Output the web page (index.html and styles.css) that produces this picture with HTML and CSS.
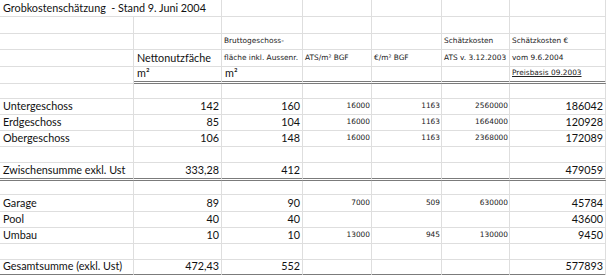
FILE: index.html
```html
<!DOCTYPE html>
<html lang="de">
<head>
<meta charset="utf-8">
<title>Grobkostenschätzung</title>
<link rel="stylesheet" href="styles.css">
</head>
<body>
<table class="sheet">
  <colgroup>
    <col class="ca"><col class="cb"><col class="cc"><col class="cd"><col class="ce"><col class="cf"><col class="cg">
  </colgroup>
  <tr class="h17">
    <td colspan="2" class="title">Grobkostenschätzung&nbsp; - Stand 9. Juni 2004</td><td></td><td></td><td></td><td></td><td></td>
  </tr>
  <tr class="h17"><td></td><td></td><td></td><td></td><td></td><td></td><td></td></tr>
  <tr class="h16">
    <td></td><td></td><td class="s">Bruttogeschoss-</td><td></td><td></td><td class="s">Schätzkosten</td><td class="s">Schätzkosten €</td>
  </tr>
  <tr class="h17">
    <td></td><td>Nettonutzfäche</td><td class="s">fläche inkl. Aussenr.</td><td class="s">ATS/m² BGF</td><td class="s">€/m² BGF</td><td class="s">ATS v. 3.12.2003</td><td class="s">vom 9.6.2004</td>
  </tr>
  <tr class="h16 dbl">
    <td class="single"></td><td>m²</td><td>m²</td><td></td><td></td><td></td><td class="s u">Preisbasis 09.2003</td>
  </tr>
  <tr class="h15"><td></td><td></td><td></td><td></td><td></td><td></td><td></td></tr>
  <tr class="h16">
    <td>Untergeschoss</td><td class="n">142</td><td class="n">160</td><td class="s n">16000</td><td class="s n">1163</td><td class="s n">2560000</td><td class="n">186042</td>
  </tr>
  <tr class="h16">
    <td>Erdgeschoss</td><td class="n">85</td><td class="n">104</td><td class="s n">16000</td><td class="s n">1163</td><td class="s n">1664000</td><td class="n">120928</td>
  </tr>
  <tr class="h16">
    <td>Obergeschoss</td><td class="n">106</td><td class="n">148</td><td class="s n">16000</td><td class="s n">1163</td><td class="s n">2368000</td><td class="n">172089</td>
  </tr>
  <tr class="h16"><td></td><td></td><td></td><td></td><td></td><td></td><td></td></tr>
  <tr class="h18 dbl">
    <td>Zwischensumme exkl. Ust</td><td class="n">333,28</td><td class="n">412</td><td></td><td></td><td></td><td class="n">479059</td>
  </tr>
  <tr class="h14"><td></td><td></td><td></td><td></td><td></td><td></td><td></td></tr>
  <tr class="h17">
    <td>Garage</td><td class="n">89</td><td class="n">90</td><td class="s n">7000</td><td class="s n">509</td><td class="s n">630000</td><td class="n">45784</td>
  </tr>
  <tr class="h16">
    <td>Pool</td><td class="n">40</td><td class="n">40</td><td></td><td></td><td></td><td class="n">43600</td>
  </tr>
  <tr class="h16">
    <td>Umbau</td><td class="n">10</td><td class="n">10</td><td class="s n">13000</td><td class="s n">945</td><td class="s n">130000</td><td class="n">9450</td>
  </tr>
  <tr class="h16"><td></td><td></td><td></td><td></td><td></td><td></td><td></td></tr>
  <tr class="h17 dbl">
    <td>Gesamtsumme (exkl. Ust)</td><td class="n">472,43</td><td class="n">552</td><td></td><td></td><td></td><td class="n">577893</td>
  </tr>
</table>
</body>
</html>
```

FILE: styles.css
```css
html, body {
  margin: 0;
  padding: 0;
  background: #ffffff;
}

body {
  font-family: Lato, "Open Sans", "Liberation Sans", sans-serif;
  font-size: 10.8px;
  color: #111111;
}

.sheet {
  border-collapse: separate;
  border-spacing: 0;
  table-layout: fixed;
  width: 606px;
}

.ca { width: 134px; }
.cb { width: 88px; }
.cc { width: 81px; }
.cd { width: 69px; }
.ce { width: 70px; }
.cf { width: 68px; }
.cg { width: 96px; }

.sheet td {
  border-right: 1px solid #dedede;
  border-bottom: 1px solid #dedede;
  padding: 0 2px 2px 3px;
  vertical-align: bottom;
  white-space: nowrap;
  overflow: visible;
  line-height: 12px;
}

.h14 { height: 14px; }
.h15 { height: 15px; }
.h16 { height: 16px; }
.h17 { height: 17px; }
.h18 { height: 18px; }

.sheet .dbl td {
  border-bottom: 3px double #7b7b7b;
}

.sheet .dbl td.single {
  border-bottom: 1px solid #dedede;
}

.sheet td.title {
  padding-left: 3px;
}

.sheet td.s {
  font-family: "DejaVu Sans", "Liberation Sans", sans-serif;
  font-size: 7.4px;
  color: #222222;
  padding-left: 2px;
  padding-right: 1px;
}

.n { text-align: right; }

.u { text-decoration: underline; }
```
